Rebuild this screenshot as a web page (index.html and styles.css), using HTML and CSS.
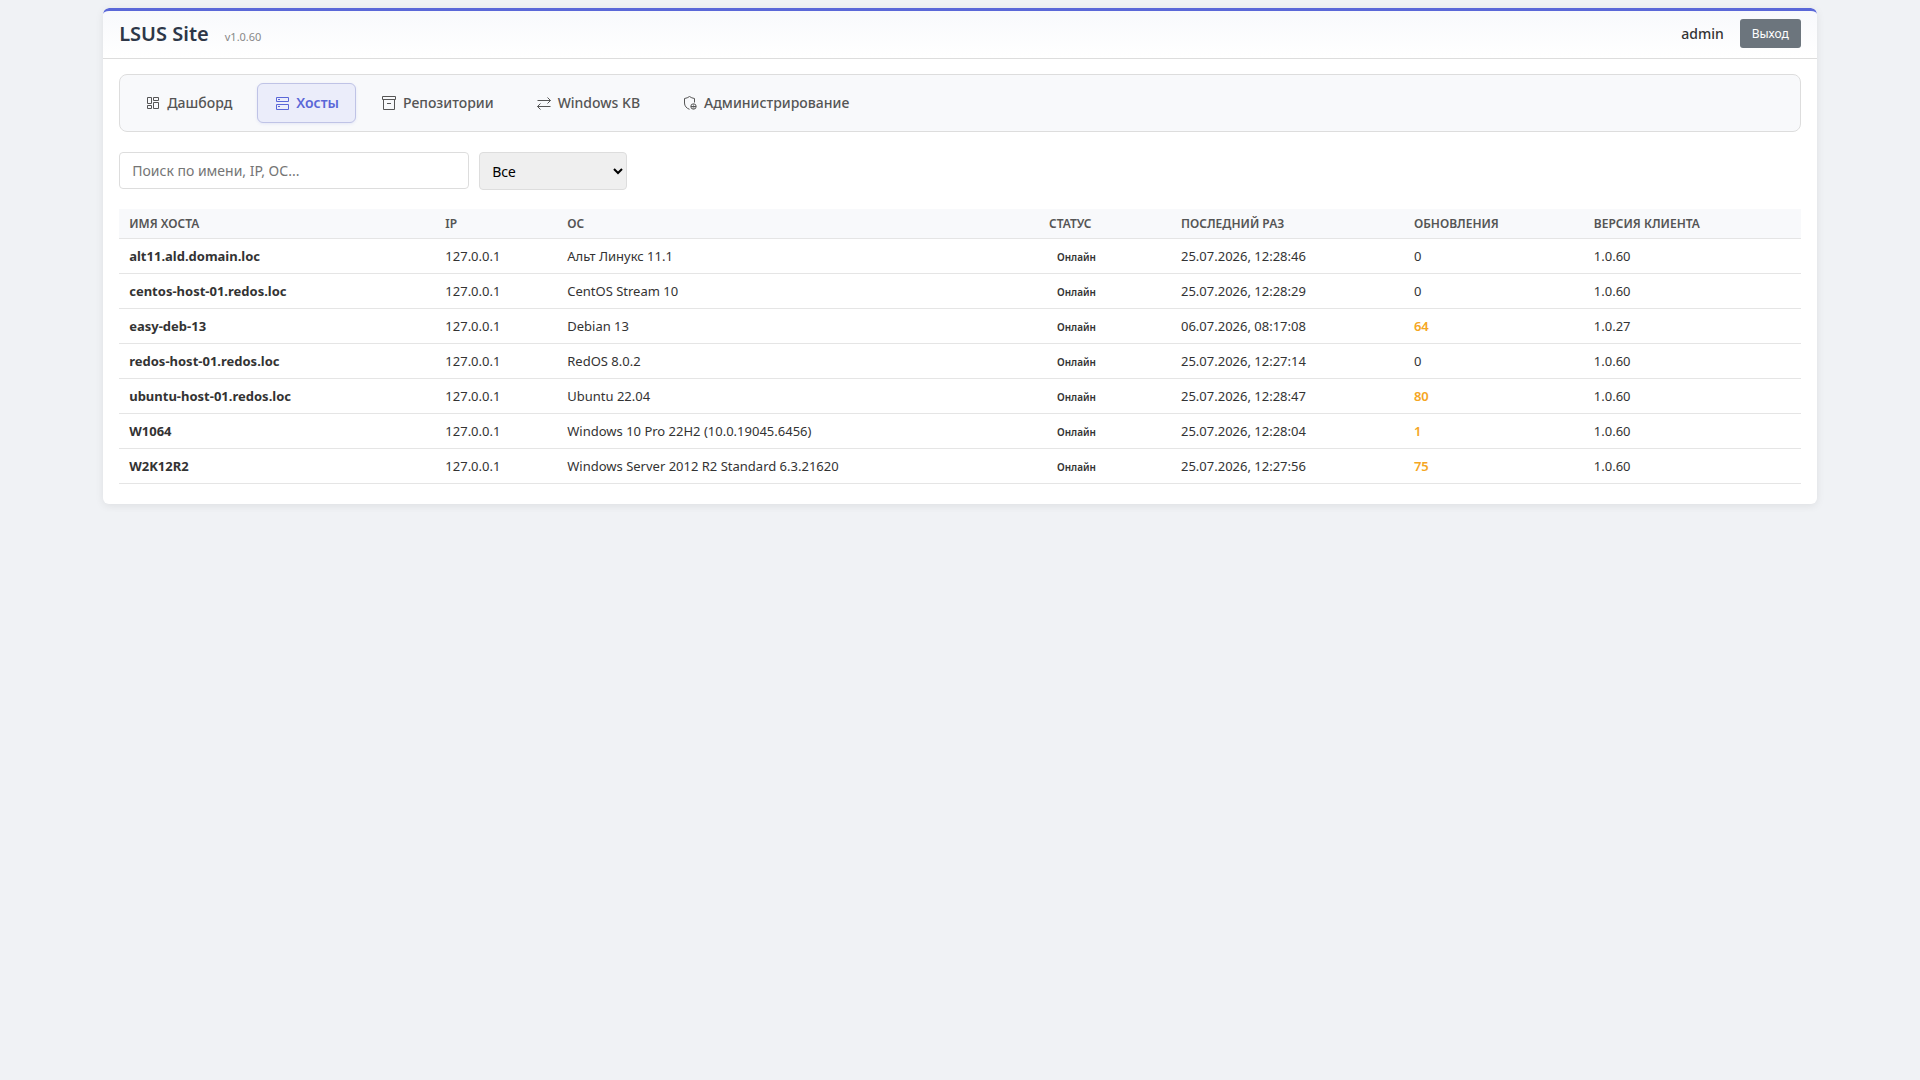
FILE: index.html
```html
<!DOCTYPE html>
<html lang="ru">
<head>
<meta charset="utf-8">
<meta name="viewport" content="width=device-width, initial-scale=1">
<title>LSUS Site</title>
<link rel="stylesheet" href="styles.css">
</head>
<body>
<div class="container">
  <header class="header">
    <div class="brand">
      <h1 class="brand-name">LSUS Site</h1>
      <span class="version">v1.0.60</span>
    </div>
    <div class="user">
      <span class="user-name">admin</span>
      <button class="logout" type="button">Выход</button>
    </div>
  </header>
  <main class="content">
    <nav class="tabs">
      <a class="tab" href="#dashboard">
        <svg class="icon" viewBox="0 0 16 16"><path d="M2.500 2.500h4v6h-4zM8.500 2.500h5v3h-5zM8.500 7.500h5v6h-5zM2.500 10.500h4v3h-4z"/></svg>
        Дашборд</a>
      <a class="tab active" href="#hosts" aria-current="page">
        <svg class="icon" viewBox="0 0 16 16"><path d="M2.500 2.500h12v4h-12zM2.500 9.500h12v5h-12zM4 4.500h2M4 11.500h2"/></svg>
        Хосты</a>
      <a class="tab" href="#repositories">
        <svg class="icon" viewBox="0 0 16 16"><path d="M1.500 1.500h13v3h-13zM2.500 4.500v10h11v-10M6 8.500h4"/></svg>
        Репозитории</a>
      <a class="tab" href="#windows-kb">
        <svg class="icon" viewBox="0 0 16 16"><path d="M1.500 5.500h13M11.500 2.500l3 3l-3 3M14.500 11.500h-13M4.500 8.500l-3 3l3 3"/></svg>
        Windows KB</a>
      <a class="tab" href="#administration">
        <svg class="icon" viewBox="0 0 16 16"><path d="M12.500 7.500V3.500C10.500 3.300 9 2.500 7.500 1.500C6 2.500 4.500 3.300 2.500 3.500V8C2.500 11 4.500 13.300 7.500 14.300"/><circle cx="11.500" cy="11.500" r="2.700"/><path d="M9 11.500h5M11.500 9.500v1M10.500 13h2"/></svg>
        Администрирование</a>
    </nav>
    <form class="filters">
      <input class="search" type="text" placeholder="Поиск по имени, IP, ОС..." aria-label="Поиск по имени, IP, ОС">
      <select class="status-filter" aria-label="Статус"><option>Все</option><option>Онлайн</option></select>
    </form>
    <table class="hosts">
      <colgroup><col class="c-name"><col class="c-ip"><col class="c-os"><col class="c-status"><col class="c-seen"><col class="c-updates"><col></colgroup>
      <thead>
        <tr><th>Имя хоста</th><th>IP</th><th>ОС</th><th>Статус</th><th>Последний раз</th><th>Обновления</th><th>Версия клиента</th></tr>
      </thead>
      <tbody>
        <tr><td class="name">alt11.ald.domain.loc</td><td>127.0.0.1</td><td>Альт Линукс 11.1</td><td><span class="status">Онлайн</span></td><td>25.07.2026, 12:28:46</td><td>0</td><td>1.0.60</td></tr>
        <tr><td class="name">centos-host-01.redos.loc</td><td>127.0.0.1</td><td>CentOS Stream 10</td><td><span class="status">Онлайн</span></td><td>25.07.2026, 12:28:29</td><td>0</td><td>1.0.60</td></tr>
        <tr><td class="name">easy-deb-13</td><td>127.0.0.1</td><td>Debian 13</td><td><span class="status">Онлайн</span></td><td>06.07.2026, 08:17:08</td><td class="pending">64</td><td>1.0.27</td></tr>
        <tr><td class="name">redos-host-01.redos.loc</td><td>127.0.0.1</td><td>RedOS 8.0.2</td><td><span class="status">Онлайн</span></td><td>25.07.2026, 12:27:14</td><td>0</td><td>1.0.60</td></tr>
        <tr><td class="name">ubuntu-host-01.redos.loc</td><td>127.0.0.1</td><td>Ubuntu 22.04</td><td><span class="status">Онлайн</span></td><td>25.07.2026, 12:28:47</td><td class="pending">80</td><td>1.0.60</td></tr>
        <tr><td class="name">W1064</td><td>127.0.0.1</td><td>Windows 10 Pro 22H2 (10.0.19045.6456)</td><td><span class="status">Онлайн</span></td><td>25.07.2026, 12:28:04</td><td class="pending">1</td><td>1.0.60</td></tr>
        <tr><td class="name">W2K12R2</td><td>127.0.0.1</td><td>Windows Server 2012 R2 Standard 6.3.21620</td><td><span class="status">Онлайн</span></td><td>25.07.2026, 12:27:56</td><td class="pending">75</td><td>1.0.60</td></tr>
      </tbody>
    </table>
  </main>
</div>
</body>
</html>
```
FILE: styles.css
```css
* { box-sizing: border-box; }
body {
  margin: 0;
  padding: 8px;
  background: #f0f2f5;
  color: #333;
  font: 14px/20px "Noto Sans", sans-serif;
}
.container {
  width: 90%;
  margin: 0 auto;
  background: #fff;
  border-radius: 6px;
  box-shadow: 0 2px 8px rgba(0, 0, 0, .08);
  overflow: hidden;
}
.header {
  display: flex;
  align-items: center;
  justify-content: space-between;
  padding: 8px 16px 10px;
  border-top: 3px solid #5a67d8;
  border-bottom: 1px solid #ddd;
  border-radius: 6px 6px 0 0;
  background: linear-gradient(#f8f9fc, #fff);
}
.brand { display: flex; align-items: baseline; gap: 16px; }
.brand-name { margin: 0; color: #2d3748; font-size: 20px; line-height: 29px; font-weight: 600; }
.version { color: #888; font-size: 11px; }
.user { display: flex; align-items: center; gap: 16px; }
.user-name { font-weight: 500; }
.logout {
  height: 29px;
  padding: 0 12px;
  border: 0;
  border-radius: 3px;
  background: #6c757d;
  color: #fff;
  font: 12px/16px "Noto Sans", sans-serif;
}
.content { padding: 15px 16px 20px; }
.tabs {
  display: flex;
  gap: 8px;
  padding: 8px;
  border: 1px solid #ddd;
  border-radius: 8px;
  background: #f8f9fb;
}
.tab {
  display: flex;
  align-items: center;
  gap: 6px;
  height: 40px;
  padding: 0 16px;
  border: 1px solid transparent;
  border-radius: 6px;
  color: #555;
  font-weight: 500;
  text-decoration: none;
}
.tab.active {
  border-color: #bfc3e6;
  background: #ebedfa;
  color: #5a67d8;
  font-weight: 600;
  box-shadow: 0 1px 3px rgba(90, 103, 216, .12);
}
.icon { width: 16px; height: 16px; fill: none; stroke: currentColor; }
.filters { display: flex; align-items: flex-start; gap: 10px; margin: 20px 0 19px; }
.search, .status-filter {
  border: 1px solid #ddd;
  border-radius: 4px;
  font: 14px/19px "Noto Sans", sans-serif;
}
.search { width: 350px; height: 37px; padding: 8px 12px; }
.status-filter { width: 148px; height: 38px; padding: 8px; background: #efefef; color: #000; }
.hosts { width: 100%; table-layout: fixed; border-collapse: separate; border-spacing: 0; font-size: 13px; }
.c-name { width: 18.8%; }
.c-ip { width: 7.25%; }
.c-os { width: 28.65%; }
.c-status { width: 7.85%; }
.c-seen { width: 13.85%; }
.c-updates { width: 10.7%; }
.hosts th, .hosts td { padding: 0 10px; border-bottom: 1px solid #e5e5e5; text-align: left; white-space: nowrap; }
.hosts th {
  height: 30px;
  background: #f8f9fb;
  color: #555;
  font-size: 12px;
  font-weight: 600;
  text-transform: uppercase;
}
.hosts td { height: 35px; }
.hosts .name { font-weight: 700; }
.hosts .pending { color: #f5a623; font-weight: 600; }
.status { display: inline-block; padding: 0 8px; font-size: 10px; line-height: 16px; font-weight: 600; }
```
